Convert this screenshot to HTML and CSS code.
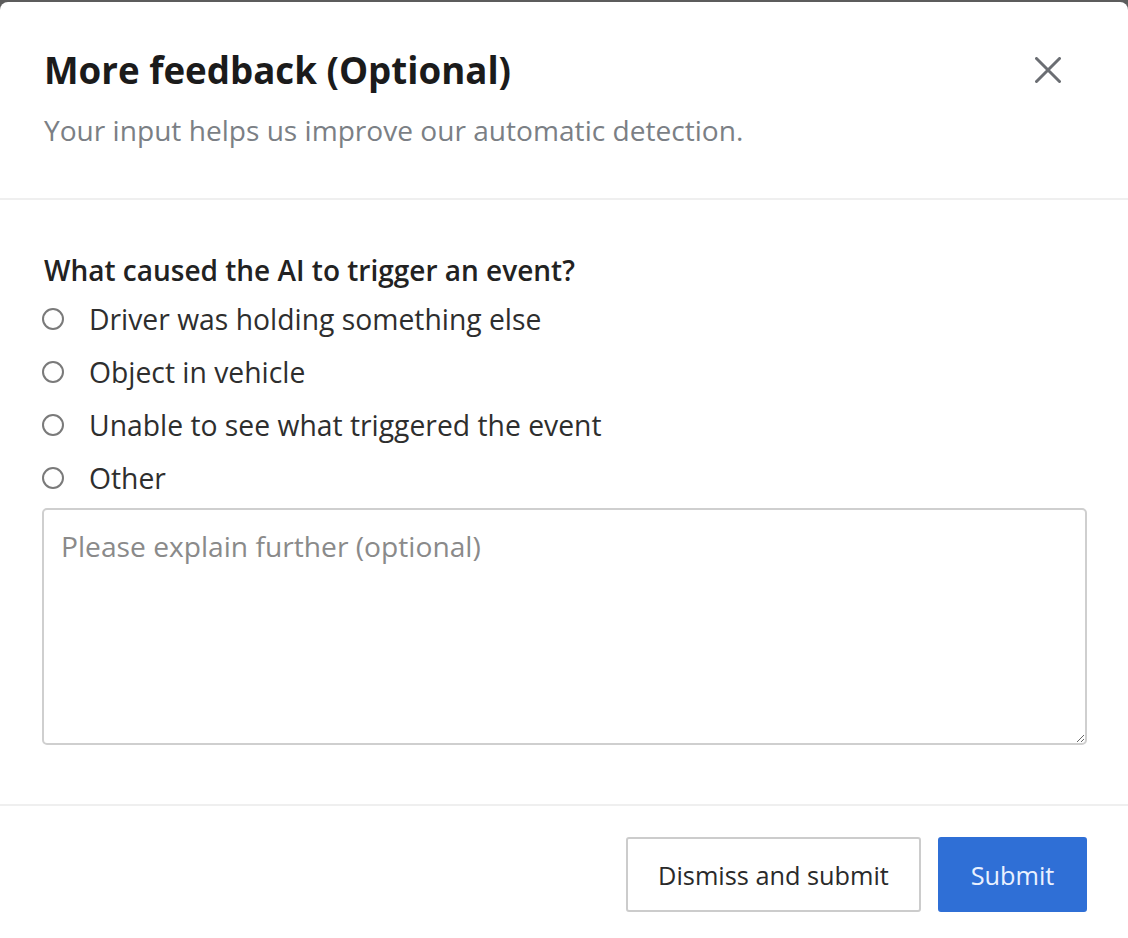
FILE: index.html
```html
<!DOCTYPE html>
<html lang="en">
<head>
<meta charset="utf-8">
<title>More feedback</title>
<link rel="stylesheet" href="styles.css">
</head>
<body>
<div class="modal">
  <header class="modal-header">
    <div class="title-row">
      <h1 class="title">More feedback (Optional)</h1>
      <button class="close" aria-label="Close">
        <svg width="26" height="26" viewBox="0 0 26 26"><path d="M1.5 1.5 L24.5 24.5 M24.5 1.5 L1.5 24.5" stroke="#6b6e73" stroke-width="3" stroke-linecap="round" fill="none"/></svg>
      </button>
    </div>
    <p class="subtitle">Your input helps us improve our automatic detection.</p>
  </header>
  <section class="modal-body">
    <p class="question">What caused the AI to trigger an event?</p>
    <label class="option"><span class="radio"></span><span class="label">Driver was holding something else</span></label>
    <label class="option"><span class="radio"></span><span class="label">Object in vehicle</span></label>
    <label class="option"><span class="radio"></span><span class="label">Unable to see what triggered the event</span></label>
    <label class="option"><span class="radio"></span><span class="label">Other</span></label>
    <textarea class="explain" placeholder="Please explain further (optional)"></textarea>
  </section>
  <footer class="modal-footer">
    <button class="btn btn-secondary">Dismiss and submit</button>
    <button class="btn btn-primary">Submit</button>
  </footer>
</div>
</body>
</html>
```
FILE: styles.css
```css
html, body {
  margin: 0;
  padding: 0;
}
body {
  background: #5c5c5c;
  font-family: "Open Sans", "Liberation Sans", sans-serif;
  color: #2b2b2b;
}
.modal {
  margin-top: 2px;
  background: #fff;
  border-radius: 8px 8px 0 0;
  min-height: 936px;
}
.modal-header {
  padding: 46px 41px 50px 44px;
  border-bottom: 2px solid #efefef;
}
.title-row {
  display: flex;
  align-items: center;
  justify-content: space-between;
}
.title {
  margin: 0;
  font-size: 36.7px;
  line-height: 44px;
  font-weight: 700;
  color: #1b1b1b;
}
.close {
  border: 0;
  background: none;
  padding: 0;
  margin-right: 26px;
  width: 26px;
  height: 26px;
  display: flex;
}
.subtitle {
  margin: 20px 0 0;
  font-size: 28.1px;
  line-height: 36px;
  color: #7b7f85;
}
.modal-body {
  padding: 52px 41px 59px 42px;
  display: flex;
  flex-direction: column;
  border-bottom: 2px solid #efefef;
}
.question {
  margin: 0 0 4px 2px;
  font-size: 28px;
  line-height: 36px;
  font-weight: 600;
  color: #222;
}
.option {
  display: flex;
  align-items: center;
  height: 53px;
}
.radio {
  width: 18px;
  height: 18px;
  border: 2px solid #7a7a7a;
  border-radius: 50%;
  margin-right: 25px;
  flex: none;
}
.label {
  font-size: 28.3px;
  color: #2e2e2e;
}
.explain {
  margin-top: 4px;
  height: 237px;
  box-sizing: border-box;
  border: 2px solid #cfcfcf;
  border-radius: 5px;
  padding: 18px 17px;
  font-family: inherit;
  font-size: 28.2px;
  line-height: 36px;
  color: #333;
  width: 100%;
}
.explain::placeholder {
  color: #8a8a8a;
}
.modal-footer {
  display: flex;
  justify-content: flex-end;
  gap: 17px;
  padding: 31px 41px 0 0;
}
.btn {
  height: 75px;
  border-radius: 3px;
  font-family: inherit;
  font-size: 25.3px;
  padding: 0 20px;
}
.btn-secondary {
  width: 295px;
  background: #fff;
  border: 2px solid #cccccc;
  color: #2a2a2a;
}
.btn-primary {
  width: 149px;
  background: #2f6fd6;
  border: 2px solid #2f6fd6;
  color: #eaf1ff;
}
```
